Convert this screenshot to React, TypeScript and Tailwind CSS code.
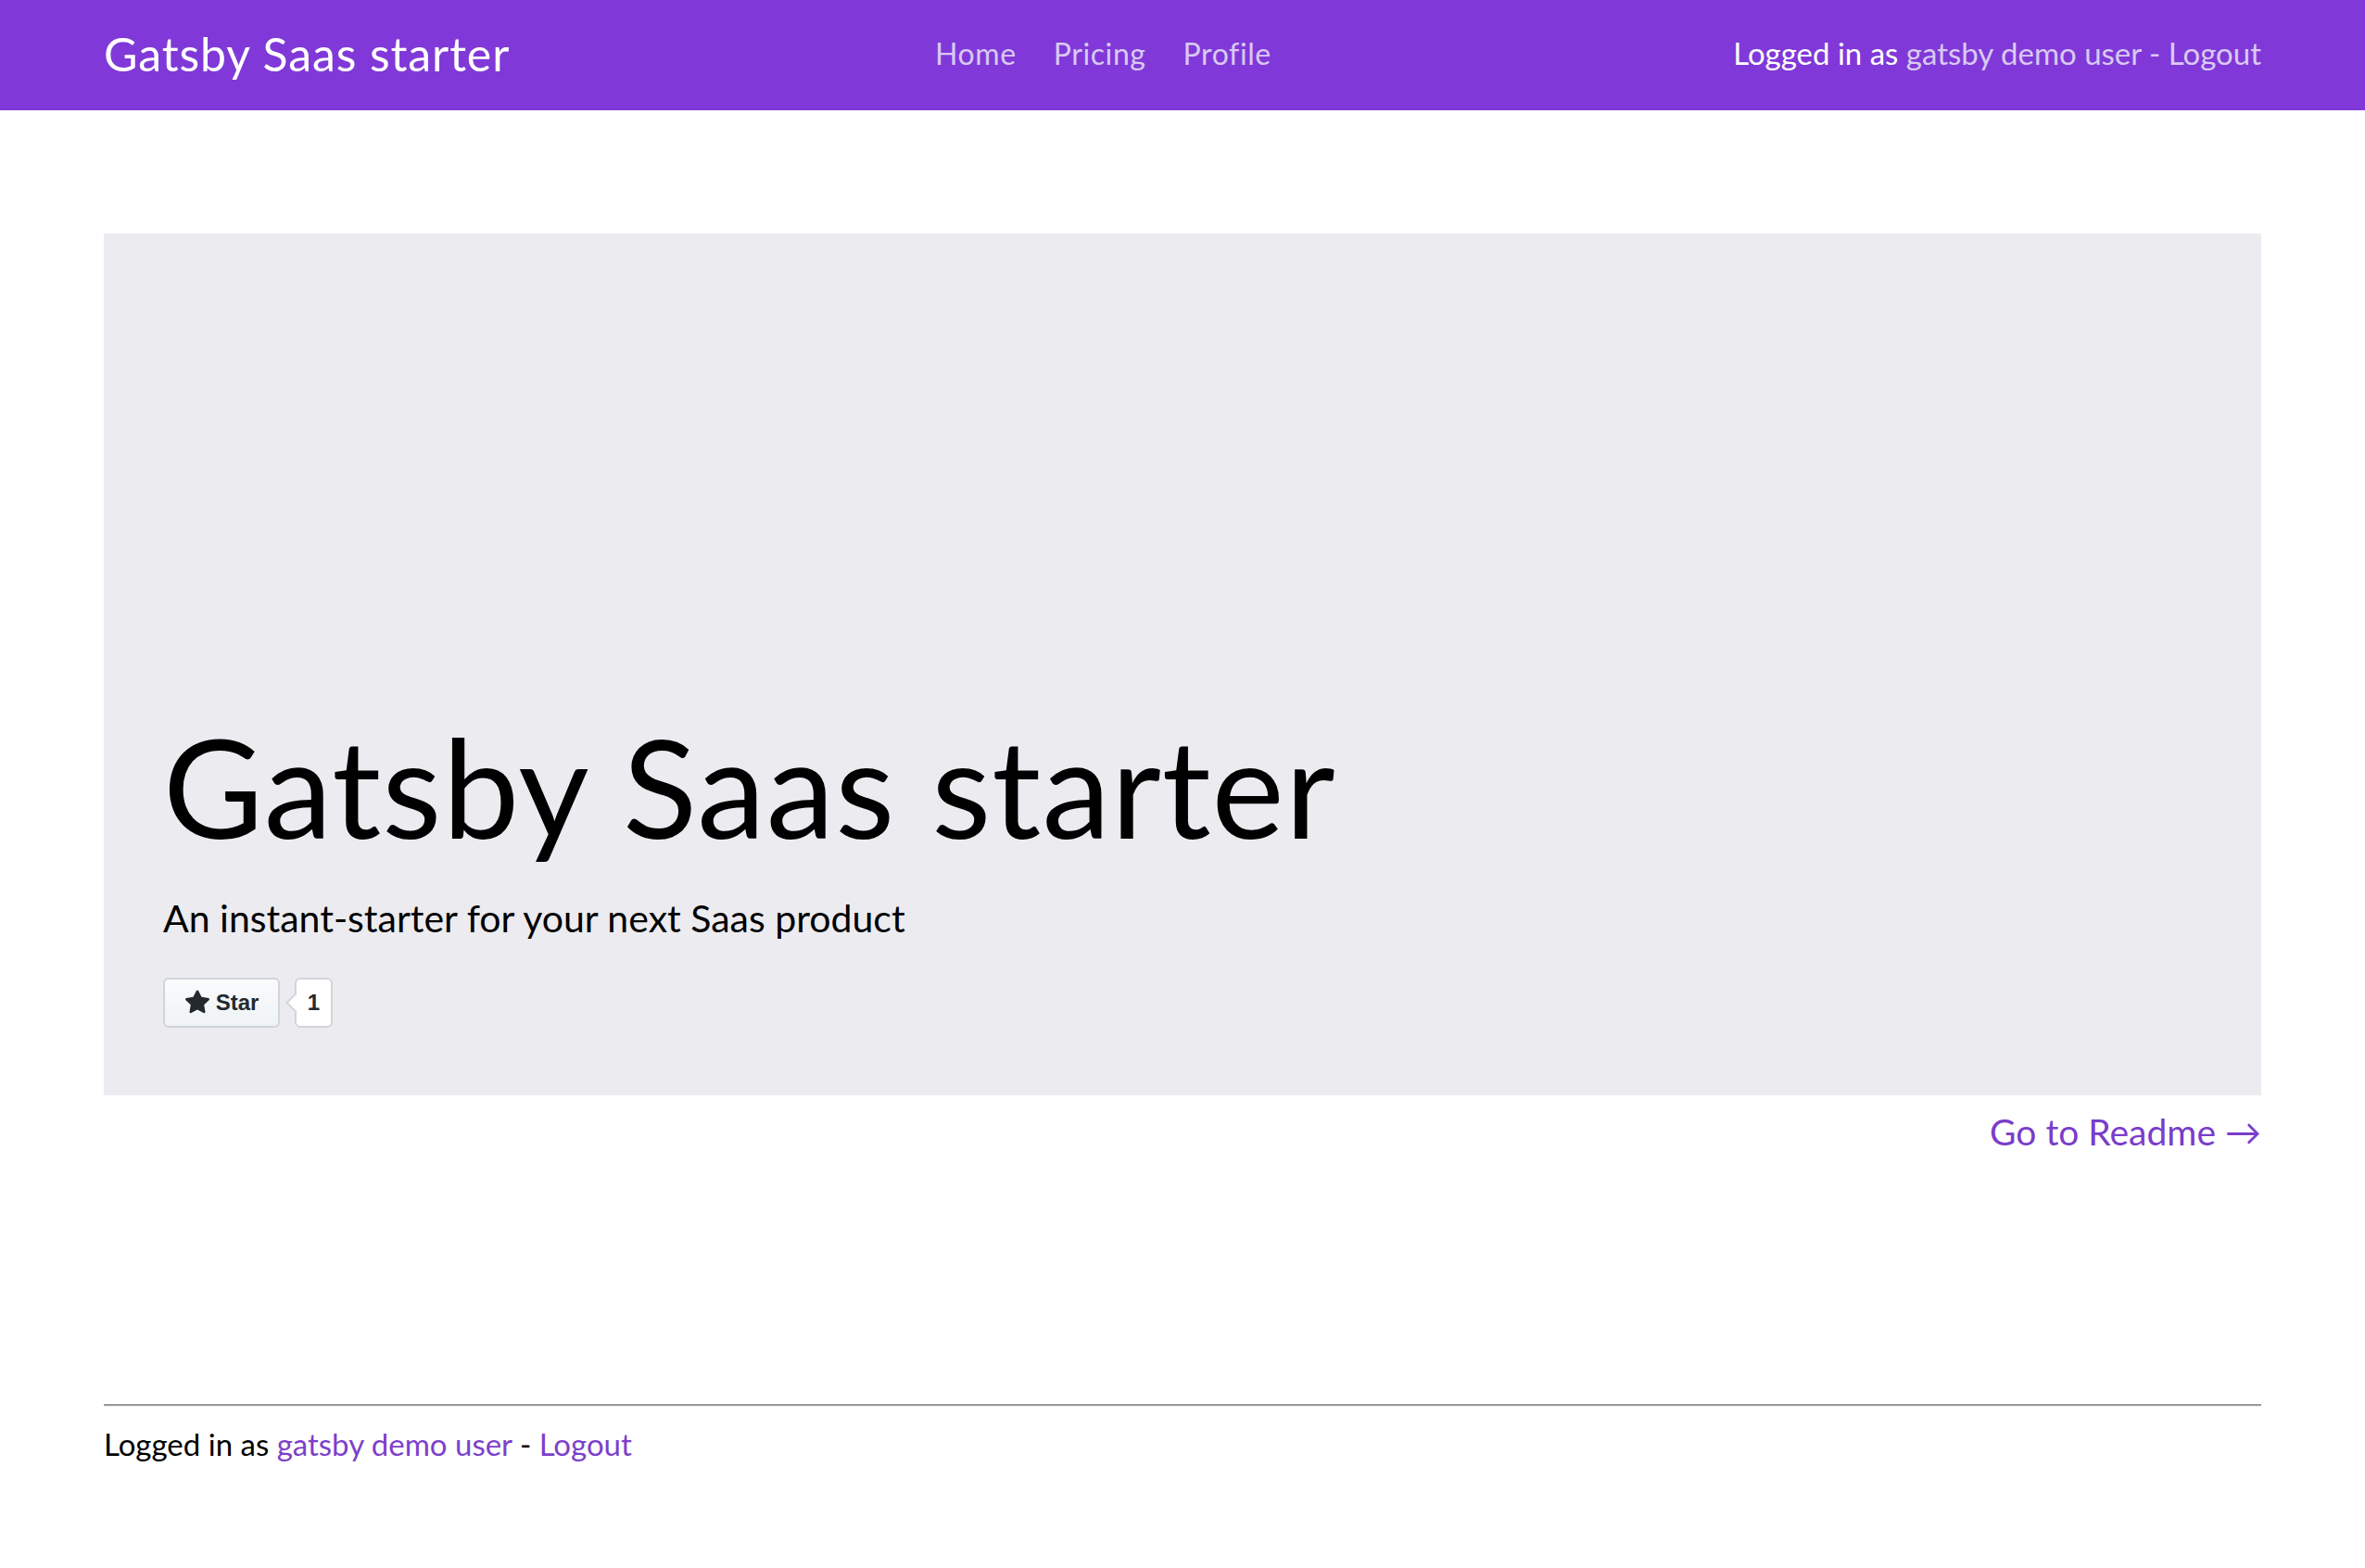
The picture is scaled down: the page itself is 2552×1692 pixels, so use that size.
import React from "react";

const F = { fontFamily: "Lato, 'Noto Sans', sans-serif" };

export default function App() {
  return (
    <div className="min-h-screen bg-white text-black" style={F}>
      <nav className="h-[119px] bg-[#8039d8] px-[112px] flex items-center">
        <a className="text-[50px] leading-none text-white tracking-[0.9px] w-[897px] -mt-[3px]">Gatsby Saas starter</a>
        <div className="flex items-center gap-[40px] text-[32px] tracking-[0.6px] text-[#d9c9f3] -mt-[4px]">
          <a>Home</a>
          <a>Pricing</a>
          <a>Profile</a>
        </div>
        <div className="ml-auto text-[33px] text-white -mt-[4px]">
          Logged in as <span className="text-[#d9c9f3]">gatsby demo user</span>{" "}
          <span className="text-[#d9c9f3]">- Logout</span>
        </div>
      </nav>

      <main className="px-[112px] pt-[133px]">
        <section className="h-[930px] bg-[#ecebf0] flex flex-col justify-end px-[64px] pb-[73px]">
          <h1 className="text-[148px] leading-none font-normal tracking-[1px]">Gatsby Saas starter</h1>
          <p className="mt-[48px] text-[41px] leading-none">An instant-starter for your next Saas product</p>
          <div className="mt-[44px] flex items-center" style={{ fontFamily: "'Liberation Sans', Arial, sans-serif" }}>
            <div className="h-[54px] w-[126px] rounded-[6px] border-2 border-[#d1d5da] bg-gradient-to-b from-[#fafbfc] to-[#eff3f6] flex items-center justify-center gap-[6px] text-[#24292e] text-[24px] font-bold">
              <svg width="28" height="28" viewBox="0 0 16 16" fill="#24292e">
                <path d="M8 .25a.75.75 0 0 1 .673.418l1.882 3.815 4.21.612a.75.75 0 0 1 .416 1.279l-3.046 2.97.719 4.192a.75.75 0 0 1-1.088.791L8 12.347l-3.766 1.98a.75.75 0 0 1-1.088-.79l.72-4.194L.818 6.374a.75.75 0 0 1 .416-1.28l4.21-.611L7.327.668A.75.75 0 0 1 8 .25Z" />
              </svg>
              <span>Star</span>
            </div>
            <div className="relative ml-[16px] h-[54px] w-[41px] rounded-[6px] border-2 border-[#d1d5da] bg-white flex items-center justify-center text-[#24292e] text-[24px] font-bold">
              <span className="absolute left-[-9px] top-[18px] w-[14px] h-[14px] bg-white border-l-2 border-b-2 border-[#d1d5da] rotate-45"></span>
              <span className="relative">1</span>
            </div>
          </div>
        </section>
        <div className="flex justify-end mt-[20px]">
          <a className="text-[39px] leading-none text-[#7a3dca]">Go to Readme →</a>
        </div>

        <div className="mt-[274px] border-t-2 border-[#999] border-b border-b-[#eee]"></div>
        <footer className="pt-[16px] text-[33px]">
          Logged in as <span className="text-[#7d3fcb]">gatsby demo user</span> -{" "}
          <span className="text-[#7d3fcb]">Logout</span>
        </footer>
      </main>
    </div>
  );
}
